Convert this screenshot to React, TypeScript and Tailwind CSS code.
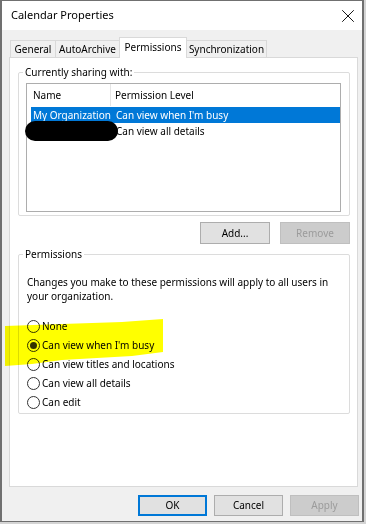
import React from "react";
import { X } from "lucide-react";

const tabs = [
  { label: "General", w: "w-[46px]" },
  { label: "AutoArchive", w: "w-[65px]" },
  { label: "Permissions", w: "w-[68px]", active: true },
  { label: "Synchronization", w: "w-[81px]" },
];

const levels = [
  "None",
  "Can view when I'm busy",
  "Can view titles and locations",
  "Can view all details",
  "Can edit",
];

function Radio({ checked }: { checked?: boolean }) {
  return (
    <span className="w-[13px] h-[13px] rounded-full border border-[#333333] bg-white flex items-center justify-center shrink-0">
      {checked && <span className="w-[7px] h-[7px] rounded-full bg-[#333333]" />}
    </span>
  );
}

function Btn({ label, disabled, focus, w }: { label: string; disabled?: boolean; focus?: boolean; w: string }) {
  return (
    <div
      className={
        "h-full flex items-center justify-center border " +
        w +
        (disabled
          ? " bg-[#cccccc] border-[#bfbfbf] text-[#9b9b9b]"
          : focus
          ? " bg-[#e1e1e1] border-[#0078d7] border-2"
          : " bg-[#e1e1e1] border-[#adadad]")
      }
    >
      {label}
    </div>
  );
}

export default function App() {
  return (
    <div className="w-[366px] h-[524px] bg-[#d4d4d4] overflow-hidden font-['Noto_Sans',sans-serif] text-[10px] text-black">
      <div className="relative w-[364px] h-[522px] border-l-2 border-r-2 border-t border-b border-[#707070] bg-[#f0f0f0] flex flex-col">
        {/* title bar */}
        <div className="h-[29px] bg-white flex items-center justify-between pl-[9px] pr-[3px] shrink-0">
          <span className="text-[11px]">Calendar Properties</span>
          <X size={22} strokeWidth={1} className="text-black" />
        </div>

        {/* tabs */}
        <div className="flex items-end pl-[8px] mt-[7px] h-[21px] -mb-px relative z-10">
          {tabs.map((t, i) => (
            <div
              key={t.label}
              className={
                "flex items-center justify-center border-[#d9d9d9] border-l border-t border-r whitespace-nowrap " +
                t.w +
                (i > 0 ? " -ml-px" : "") +
                (t.active ? " h-[21px] bg-white relative z-10 pb-[2px]" : " h-[18px] bg-[#f0f0f0] border-b")
              }
            >
              {t.label}
            </div>
          ))}
        </div>

        {/* tab panel */}
        <div className="ml-[7px] w-[349px] h-[430px] border border-[#d9d9d9] bg-white flex flex-col shrink-0">
          <fieldset className="ml-[8px] mt-[6px] w-[332px] border border-[#dcdcdc] rounded-[2px] px-0 pb-[3px]">
            <legend className="ml-[4px] px-[2px] leading-[16px]">Currently sharing with:</legend>
            <div className="ml-[7px] mt-[3px] w-[315px] h-[129px] border border-[#adadad] bg-white">
              <div className="h-[22px] flex items-center whitespace-nowrap">
                <div className="w-[84px] h-full pl-[6px] flex items-center border-r border-[#e5e5e5]">Name</div>
                <div className="pl-[4px]">Permission Level</div>
              </div>
              <div className="mt-[1px] ml-[4px] h-[16px] flex items-center bg-[#0078d7] text-white whitespace-nowrap">
                <div className="w-[80px] pl-[2px]">My Organization</div>
                <div className="pl-[5px]">Can view when I'm busy</div>
              </div>
              <div className="ml-[4px] h-[16px] flex items-center whitespace-nowrap">
                <div className="w-[80px] pl-[2px]" />
                <div className="pl-[5px]">Can view all details</div>
              </div>
            </div>
          </fieldset>

          <div className="ml-[8px] mt-[6px] w-[332px] h-[22px] flex justify-end gap-[10px]">
            <Btn label="Add..." w="w-[70px]" />
            <Btn label="Remove" w="w-[70px]" disabled />
          </div>

          <fieldset className="ml-[8px] mt-[2px] w-[332px] h-[168px] border border-[#dcdcdc] rounded-[2px] px-0">
            <legend className="ml-[4px] px-[2px] leading-[16px]">Permissions</legend>
            <p className="ml-[8px] mt-[13px] leading-[14px] whitespace-nowrap">
              Changes you make to these permissions will apply to all users in
              <br />
              your organization.
            </p>
            <div className="mt-[14px] ml-[8px] flex flex-col">
              {levels.map((l, i) => (
                <div key={l} className="h-[19px] flex items-center gap-[2px] whitespace-nowrap">
                  <Radio checked={i === 1} />
                  <span>{l}</span>
                </div>
              ))}
            </div>
          </fieldset>
        </div>

        {/* dialog buttons */}
        <div className="mt-[8px] h-[21px] flex justify-end gap-[7px] pr-[3px]">
          <Btn label="OK" w="w-[69px]" focus />
          <Btn label="Cancel" w="w-[69px]" />
          <Btn label="Apply" w="w-[69px]" disabled />
        </div>

        {/* redaction blob */}
        <div className="absolute left-[23px] top-[120px] w-[93px] h-[20px] rounded-full bg-black" />

        {/* marker highlight */}
        <svg className="absolute left-0 top-0 mix-blend-multiply pointer-events-none" width="364" height="522">
          <polygon
            points="3,325 60,323 120,321 161,318 161,351 130,355 60,359 30,363 3,365"
            fill="#ffff00"
          />
        </svg>
      </div>
    </div>
  );
}
